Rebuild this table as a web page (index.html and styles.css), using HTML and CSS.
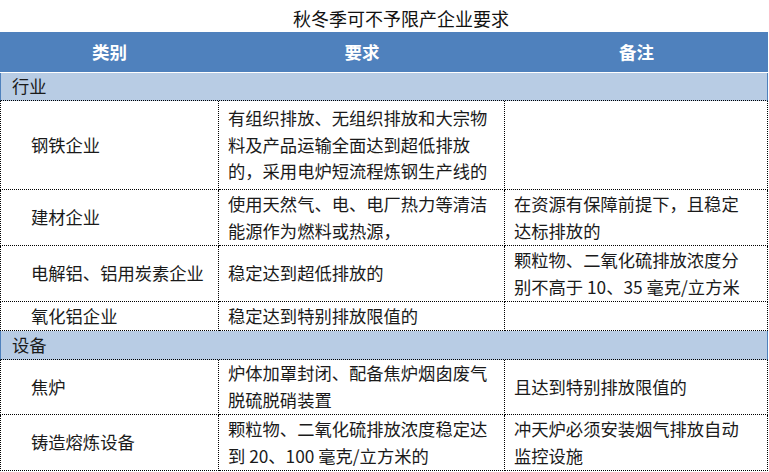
FILE: index.html
```html
<!DOCTYPE html>
<html lang="zh-CN">
<head>
<meta charset="utf-8">
<title>秋冬季可不予限产企业要求</title>
<link rel="stylesheet" href="styles.css">
</head>
<body>
<div class="title">秋冬季可不予限产企业要求</div>
<div class="grid">
  <div class="cell head">类别</div>
  <div class="cell head">要求</div>
  <div class="cell head">备注</div>

  <div class="cell section h28">行业</div>

  <div class="cell c1 h89">钢铁企业</div>
  <div class="cell c2 h89"><span>有组织排放、无组织排放和大宗物<br>料及产品运输全面达到超低排放<br>的，采用电炉短流程炼钢生产线的</span></div>
  <div class="cell c3 h89"></div>

  <div class="cell c1 h56">建材企业</div>
  <div class="cell c2 h56"><span>使用天然气、电、电厂热力等清洁<br>能源作为燃料或热源，</span></div>
  <div class="cell c3 h56"><span>在资源有保障前提下，且稳定<br>达标排放的</span></div>

  <div class="cell c1 h56">电解铝、铝用炭素企业</div>
  <div class="cell c2 h56"><span>稳定达到超低排放的</span></div>
  <div class="cell c3 h56"><span>颗粒物、二氧化硫排放浓度分<br>别不高于 10、35 毫克/立方米</span></div>

  <div class="cell c1 h29">氧化铝企业</div>
  <div class="cell c2 h29"><span>稳定达到特别排放限值的</span></div>
  <div class="cell c3 h29"></div>

  <div class="cell section h29">设备</div>

  <div class="cell c1 h55">焦炉</div>
  <div class="cell c2 h55"><span>炉体加罩封闭、配备焦炉烟囱废气<br>脱硫脱硝装置</span></div>
  <div class="cell c3 h55"><span>且达到特别排放限值的</span></div>

  <div class="cell c1 h56">铸造熔炼设备</div>
  <div class="cell c2 h56"><span>颗粒物、二氧化硫排放浓度稳定达<br>到 20、100 毫克/立方米的</span></div>
  <div class="cell c3 h56"><span>冲天炉必须安装烟气排放自动<br>监控设施</span></div>
</div>
</body>
</html>
```

FILE: styles.css
```css
html, body {
  margin: 0;
  padding: 0;
  background: #ffffff;
}
body {
  font-family: "Noto Sans CJK SC", "Noto Sans", sans-serif;
  color: #1a1a1a;
  width: 769px;
}
.title {
  height: 32px;
  line-height: 36px;
  font-size: 18px;
  text-align: center;
  padding-left: 34px;
  color: #111111;
  box-sizing: border-box;
  width: 768px;
}
.grid {
  display: grid;
  grid-template-columns: 219px 286px 263px;
  width: 768px;
}
.cell {
  box-sizing: border-box;
  display: flex;
  align-items: center;
  font-size: 17.3px;
  line-height: 26.6px;
  white-space: nowrap;
  overflow: hidden;
}
.head {
  height: 41px;
  background: #4f81bd;
  border-bottom: 1px solid #ffffff;
  color: #ffffff;
  font-weight: bold;
  justify-content: center;
  font-size: 17.5px;
}
.section {
  grid-column: 1 / 4;
  background: #b8cce4;
  border-left: 1px solid #4f81bd;
  border-right: 1px solid #4f81bd;
  border-bottom: 1px dotted #000000;
  padding-left: 11px;
}
.c1, .c2, .c3 {
  border-right: 1px dotted #000000;
  border-bottom: 1px dotted #000000;
}
.c1 {
  border-left: 1px dotted #000000;
  padding-left: 30px;
}
.c2, .c3 {
  padding-left: 9px;
}
.h28 { height: 28px; }
.h29 { height: 29px; }
.h55 { height: 55px; }
.h56 { height: 56px; }
.h89 { height: 89px; }
```
